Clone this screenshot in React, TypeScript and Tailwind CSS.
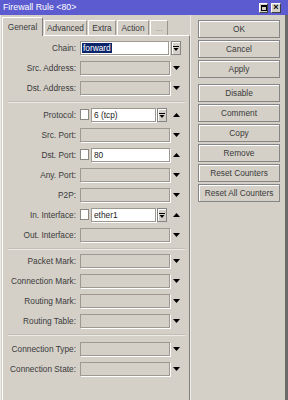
import React from "react";

const labelCls = "w-[73px] h-[14px] flex items-center justify-end text-[#3a3a3a] whitespace-nowrap";
const boxCls = "h-[14px] border border-[#9d9991] shadow-[1px_1px_0_#ffffff]";

function Arrow({ up }: { up?: boolean }) {
  return (
    <svg width="7" height="6" viewBox="0 0 7 6" className="block">
      {up ? <path d="M0 5h7L3.5 1z" fill="#000" /> : <path d="M0 1h7L3.5 5z" fill="#000" />}
    </svg>
  );
}

function ComboButton() {
  return (
    <div className="w-[10px] h-[14px] bg-[#d4d0c8] border border-[#858585] shadow-[inset_1px_1px_0_#ffffff] flex items-center justify-center">
      <svg width="6" height="7" viewBox="0 0 6 7" className="block">
        <path d="M0 1.5h6" stroke="#000" strokeWidth="1" />
        <path d="M0.5 3h5L3 6z" fill="#000" />
      </svg>
    </div>
  );
}

function Checkbox() {
  return <div className="w-[9px] h-[11px] bg-white border border-[#8a8680] mt-[1px]" />;
}

// Plain empty (disabled-look) field with a trailing arrow
function Row({ label, up }: { label: string; up?: boolean }) {
  return (
    <div className="flex h-[20px]">
      <div className={labelCls}>{label}</div>
      <div className={`${boxCls} w-[90px] ml-[4px]`} />
      <div className="w-[7px] ml-[3px] h-[14px] flex items-center">
        <Arrow up={up} />
      </div>
    </div>
  );
}

function CheckRow({ label, value, combo }: { label: string; value: string; combo?: boolean }) {
  return (
    <div className="flex h-[20px]">
      <div className={labelCls}>{label}</div>
      <div className="flex w-[90px] ml-[4px] h-[14px]">
        <Checkbox />
        <div
          className={`${boxCls} bg-white ml-[2px] flex items-center pl-[2px] text-[#222] ${combo ? "w-[65px]" : "w-[79px]"}`}
        >
          {value}
        </div>
        {combo && (
          <div className="ml-[1px]">
            <ComboButton />
          </div>
        )}
      </div>
      <div className="w-[7px] ml-[3px] h-[14px] flex items-center">
        <Arrow up />
      </div>
    </div>
  );
}

function Sep({ h }: { h: string }) {
  return (
    <div className={`${h} pl-[5px] pr-[4px]`}>
      <div className="h-[1px] bg-[#c2beb6]" />
      <div className="h-[1px] bg-[#ecebe6]" />
    </div>
  );
}

function Btn({ children, mt }: { children: React.ReactNode; mt?: string }) {
  return (
    <div
      className={`w-[82px] h-[18px] flex items-center justify-center border border-[#858585] shadow-[inset_1px_1px_0_#ffffff] text-[#3a3a3a] ${mt ?? "mt-[2px]"}`}
    >
      {children}
    </div>
  );
}

function Tab({ label, w, active, dim }: { label: string; w: string; active?: boolean; dim?: boolean }) {
  if (active) {
    return (
      <div
        className={`${w} h-[19px] -mb-[1px] z-10 bg-[#d4d0c8] border-l border-t border-white border-r border-r-[#808080] flex items-center justify-center text-[#3a3a3a]`}
      >
        {label}
      </div>
    );
  }
  return (
    <div
      className={`${w} h-[15px] ml-[1px] bg-[#d4d0c8] border-l border-t border-white border-r border-r-[#9a968e] flex items-center justify-center ${dim ? "text-[#9a968e]" : "text-[#3a3a3a]"}`}
    >
      {label}
    </div>
  );
}

export default function App() {
  return (
    <div className="w-[288px] h-[400px] bg-[#d4d0c8] overflow-hidden font-['Liberation_Sans',Arial,sans-serif] text-[8.3px] leading-none">
      {/* title bar */}
      <div className="h-[15px] bg-[#5c5cd0] flex items-center pl-[3px] pr-[7px]">
        <span className="text-white text-[8.8px] flex-1">Firewall Rule &lt;80&gt;</span>
        <div className="w-[9px] h-[10px] bg-[#d4d0c8] border border-[#404040] border-t-white border-l-white flex items-center justify-center">
          <div className="w-[6px] h-[6px] border border-black border-t-2" />
        </div>
        <div className="w-[10px] h-[10px] ml-[3px] bg-[#d4d0c8] border border-[#404040] border-t-white border-l-white flex items-center justify-center text-[9px] font-bold text-black">
          ×
        </div>
      </div>

      <div className="flex h-[385px] border-l border-l-[#ecebe6] border-r-[3px] border-r-[#6a6a6a]">
        {/* left: tabs + form */}
        <div className="w-[189px] pl-[1px] pt-[2px] flex flex-col">
          <div className="h-[18px] flex items-end">
            <Tab label="General" w="w-[41px]" active />
            <Tab label="Advanced" w="w-[43px]" />
            <Tab label="Extra" w="w-[28px]" />
            <Tab label="Action" w="w-[32px]" />
            <Tab label="..." w="w-[18px]" dim />
          </div>
          <div className="flex-1 border-l border-t border-white border-r border-r-[#808080] pt-[5px]">
            <div className="flex h-[20px]">
              <div className={labelCls}>Chain:</div>
              <div className={`${boxCls} bg-white w-[89px] ml-[4px] flex items-center pl-[1px]`}>
                <span className="bg-[#0a246a] text-white px-[1px] h-[10px] flex items-center">forward</span>
              </div>
              <div className="ml-[2px]">
                <ComboButton />
              </div>
            </div>
            <Row label="Src. Address:" />
            <Row label="Dst. Address:" />
            <Sep h="h-[7px]" />
            <CheckRow label="Protocol:" value="6 (tcp)" combo />
            <Row label="Src. Port:" />
            <CheckRow label="Dst. Port:" value="80" />
            <Row label="Any. Port:" />
            <Row label="P2P:" />
            <CheckRow label="In. Interface:" value="ether1" combo />
            <Row label="Out. Interface:" />
            <Sep h="h-[6px]" />
            <Row label="Packet Mark:" />
            <Row label="Connection Mark:" />
            <Row label="Routing Mark:" />
            <Row label="Routing Table:" />
            <Sep h="h-[8px]" />
            <Row label="Connection Type:" />
            <Row label="Connection State:" />
          </div>
        </div>

        {/* right: buttons */}
        <div className="flex-1 border-l border-l-[#ecebe6] pl-[7px] pt-[5px]">
          <Btn mt="mt-0">OK</Btn>
          <Btn>Cancel</Btn>
          <Btn>Apply</Btn>
          <Btn mt="mt-[6px]">Disable</Btn>
          <Btn>Comment</Btn>
          <Btn>Copy</Btn>
          <Btn>Remove</Btn>
          <Btn>Reset Counters</Btn>
          <Btn>Reset All Counters</Btn>
        </div>
      </div>
    </div>
  );
}
